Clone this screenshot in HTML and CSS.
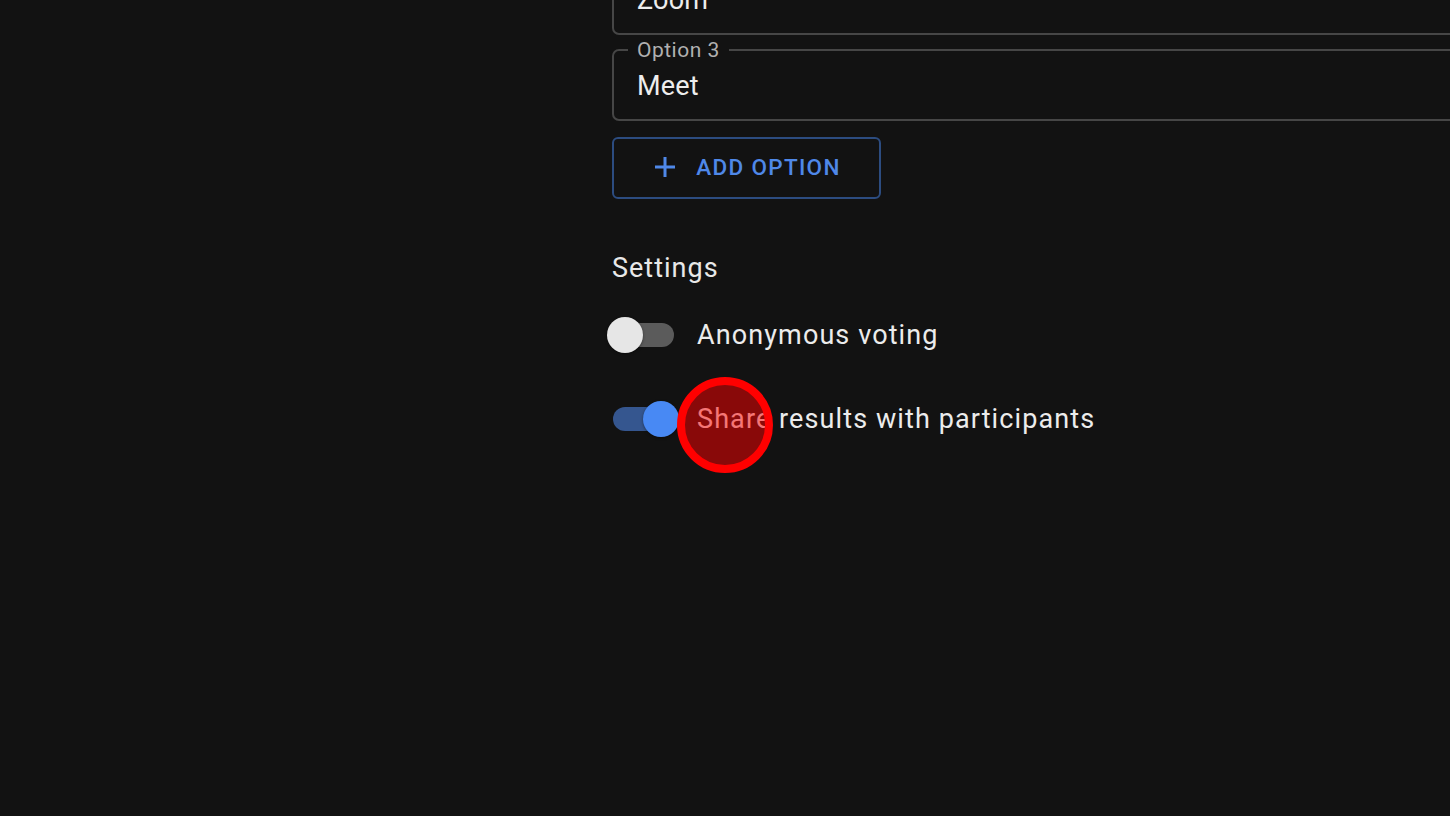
FILE: index.html
```html
<!DOCTYPE html>
<html lang="en">
<head>
<meta charset="utf-8">
<title>Poll options</title>
<link rel="stylesheet" href="styles.css">
</head>
<body>
<main class="form">
  <div class="field">
    <span class="value">Zoom</span>
  </div>
  <div class="field">
    <span class="label">Option 3</span>
    <span class="value">Meet</span>
  </div>
  <button class="add-btn" type="button">
    <svg class="plus" width="20" height="20" viewBox="0 0 20 20" aria-hidden="true">
      <path d="M10 0v20M0 10h20" stroke="currentColor" stroke-width="3"/>
    </svg>
    <span>ADD OPTION</span>
  </button>
  <h2 class="settings-title">Settings</h2>
  <div class="setting-row first">
    <span class="switch"><span class="track"></span><span class="thumb"></span></span>
    <span class="setting-label">Anonymous voting</span>
  </div>
  <div class="setting-row second">
    <span class="switch on"><span class="track"></span><span class="thumb"></span></span>
    <span class="setting-label">Share results with participants</span>
  </div>
</main>
<div class="click-marker"></div>
</body>
</html>
```
FILE: styles.css
```css
html, body {
  margin: 0;
  padding: 0;
  background: #121212;
  height: 100%;
  overflow: hidden;
}
body {
  font-family: Roboto, "Noto Sans", "Liberation Sans", sans-serif;
  color: #ececec;
  position: relative;
}
.form {
  margin-left: 612px;
  margin-top: -37px;
  width: 950px;
  display: flex;
  flex-direction: column;
  align-items: flex-start;
}
.field {
  position: relative;
  box-sizing: border-box;
  width: 100%;
  height: 72px;
  border: 2px solid #464646;
  border-radius: 7px;
  padding: 19px 23px 0;
  margin-bottom: 14px;
}
.field .value {
  font-size: 27px;
  line-height: 32px;
  letter-spacing: 0.2px;
  color: #ededed;
  display: block;
}
.field .label {
  position: absolute;
  left: 14px;
  top: -12px;
  padding: 0 9px;
  background: #121212;
  font-size: 21px;
  line-height: 22px;
  letter-spacing: 0.5px;
  color: #b0b0b0;
}
.add-btn {
  margin-top: 2px;
  box-sizing: border-box;
  width: 269px;
  height: 62px;
  border: 2px solid #2c4c80;
  border-radius: 6px;
  background: transparent;
  color: #4f88e8;
  display: flex;
  align-items: center;
  justify-content: center;
  gap: 21px;
  font-family: inherit;
  font-size: 22.5px;
  font-weight: 500;
  letter-spacing: 1.3px;
  padding: 0 0 3px 3px;
}
.plus {
  display: block;
}
.settings-title {
  margin: 53px 0 0;
  font-size: 27px;
  line-height: 32px;
  letter-spacing: 1px;
  font-weight: 400;
  color: #e8e8e8;
}
.setting-row {
  display: flex;
  align-items: center;
  height: 36px;
  gap: 23px;
}
.setting-row.first {
  margin-top: 33px;
}
.setting-row.second {
  margin-top: 48px;
}
.setting-label {
  font-size: 27px;
  line-height: 32px;
  letter-spacing: 1.1px;
  color: #ececec;
}
.switch {
  position: relative;
  width: 61px;
  height: 24px;
  margin-left: 1px;
}
.track {
  position: absolute;
  inset: 0;
  border-radius: 12px;
  background: #5b5b5b;
}
.thumb {
  position: absolute;
  top: -6px;
  left: -6px;
  width: 36px;
  height: 36px;
  border-radius: 50%;
  background: #e6e6e6;
  box-shadow: 0 1px 3px rgba(0, 0, 0, 0.4);
}
.switch.on .track {
  background: #35568f;
}
.switch.on .thumb {
  left: 30px;
  background: #4889f4;
}
.click-marker {
  position: absolute;
  left: 677px;
  top: 377px;
  width: 96px;
  height: 96px;
  box-sizing: border-box;
  border-radius: 50%;
  border: 8px solid #ff0000;
  background: rgba(255, 0, 0, 0.5);
}
```
